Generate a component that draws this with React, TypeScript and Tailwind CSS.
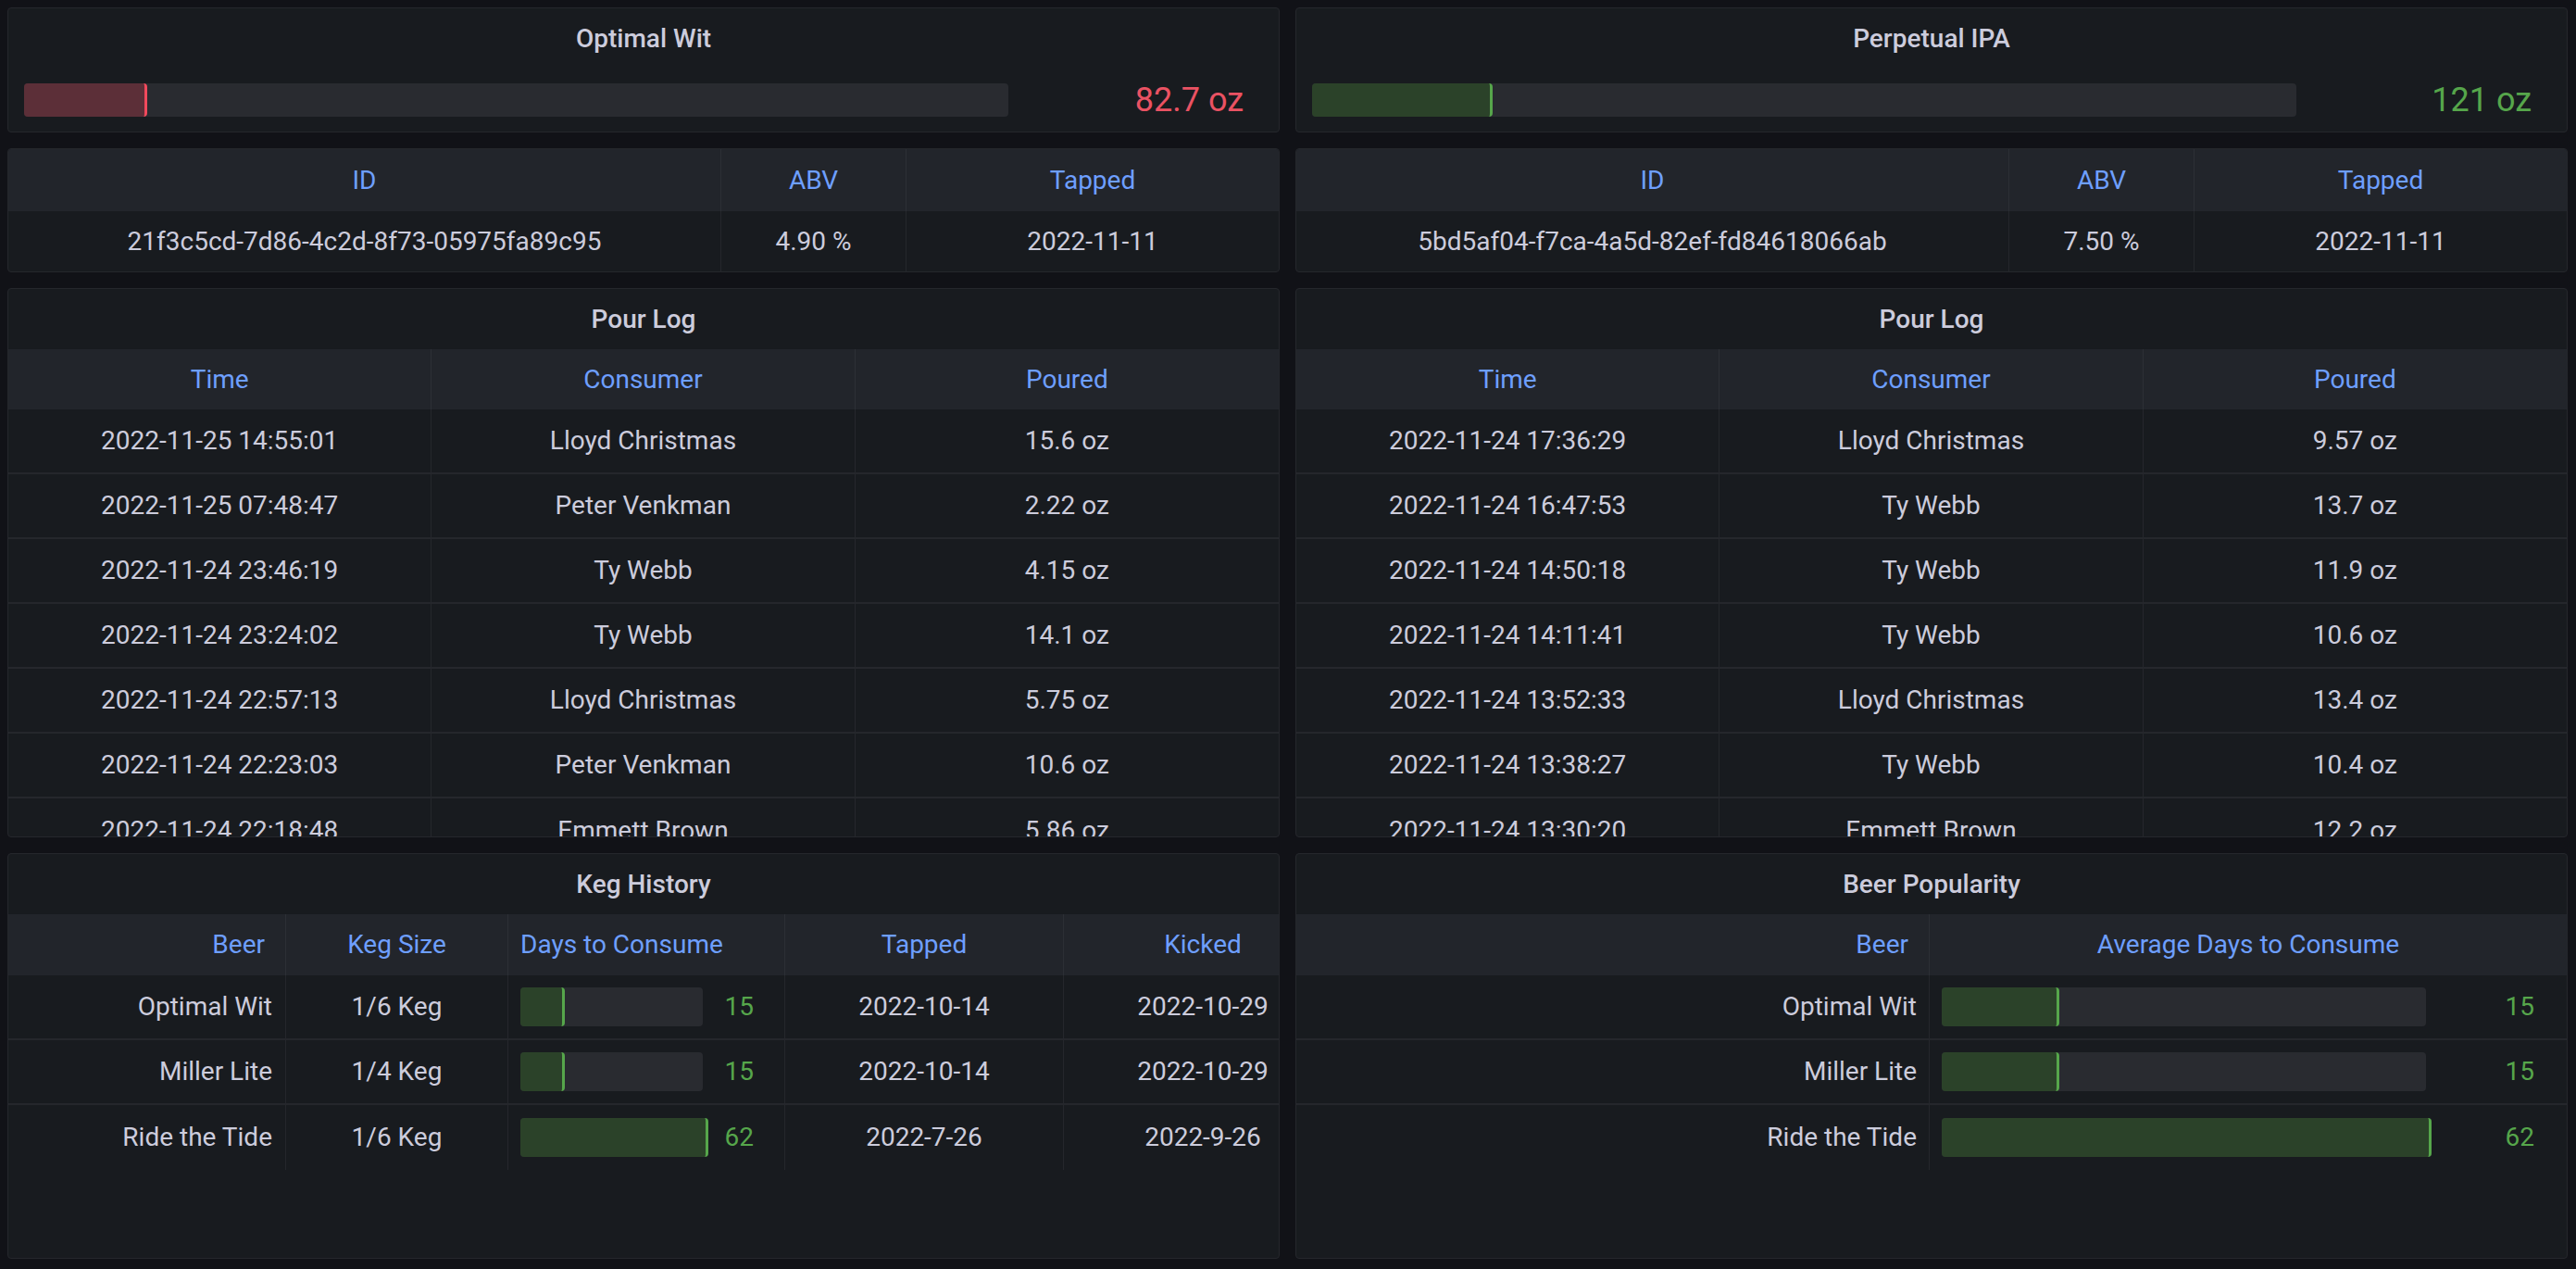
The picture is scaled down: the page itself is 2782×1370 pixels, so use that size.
type Tone = "red" | "green";

const panel =
  "bg-[#181b1f] border border-[#25272c] rounded-[4px] overflow-hidden flex flex-col min-h-0";

const pourLeft = [
  ["2022-11-25 14:55:01", "Lloyd Christmas", "15.6 oz"],
  ["2022-11-25 07:48:47", "Peter Venkman", "2.22 oz"],
  ["2022-11-24 23:46:19", "Ty Webb", "4.15 oz"],
  ["2022-11-24 23:24:02", "Ty Webb", "14.1 oz"],
  ["2022-11-24 22:57:13", "Lloyd Christmas", "5.75 oz"],
  ["2022-11-24 22:23:03", "Peter Venkman", "10.6 oz"],
  ["2022-11-24 22:18:48", "Emmett Brown", "5.86 oz"],
];

const pourRight = [
  ["2022-11-24 17:36:29", "Lloyd Christmas", "9.57 oz"],
  ["2022-11-24 16:47:53", "Ty Webb", "13.7 oz"],
  ["2022-11-24 14:50:18", "Ty Webb", "11.9 oz"],
  ["2022-11-24 14:11:41", "Ty Webb", "10.6 oz"],
  ["2022-11-24 13:52:33", "Lloyd Christmas", "13.4 oz"],
  ["2022-11-24 13:38:27", "Ty Webb", "10.4 oz"],
  ["2022-11-24 13:30:20", "Emmett Brown", "12.2 oz"],
];

const kegs = [
  { beer: "Optimal Wit", size: "1/6 Keg", days: 15, tapped: "2022-10-14", kicked: "2022-10-29" },
  { beer: "Miller Lite", size: "1/4 Keg", days: 15, tapped: "2022-10-14", kicked: "2022-10-29" },
  { beer: "Ride the Tide", size: "1/6 Keg", days: 62, tapped: "2022-7-26", kicked: "2022-9-26" },
];

// fill of a bar gauge, width comes from the data
function Fill({ pct, tone }: { pct: number; tone: Tone }) {
  return (
    <div
      className={
        tone === "red"
          ? "h-full rounded-[4px] bg-[#5c2f38] border-r-[3px] border-[#f2495c]"
          : "h-full rounded-[4px] bg-[#2b4229] border-r-[3px] border-[#56a64b]"
      }
      style={{ width: `${pct}%` }}
    />
  );
}

function Title({ children }: { children: string }) {
  return (
    <div className="h-[65px] shrink-0 flex items-center justify-center text-[28px] font-medium text-[#ccccdc]">
      {children}
    </div>
  );
}

function LevelPanel({ title, value, oz, tone }: { title: string; value: string; oz: number; tone: Tone }) {
  return (
    <div className={panel}>
      <Title>{title}</Title>
      <div className="flex-1 flex items-center pl-[17px] pr-[38px]">
        <div className="flex-1 h-[36px] rounded-[4px] bg-[#292b30]">
          <Fill pct={(oz / 661) * 100} tone={tone} />
        </div>
        <div
          className={
            tone === "red"
              ? "w-[254px] text-right text-[36px] leading-none text-[#ea5263]"
              : "w-[254px] text-right text-[36px] leading-none text-[#56a64b]"
          }
        >
          {value}
        </div>
      </div>
    </div>
  );
}

function InfoPanel({ id, abv, tapped }: { id: string; abv: string; tapped: string }) {
  return (
    <div className={panel}>
      <div className="grid grid-cols-[770px_200px_1fr] h-[67px] shrink-0 bg-[#22252b] text-[#6e9fff]">
        <div className="flex items-center justify-center border-r border-[#2c2f35]">ID</div>
        <div className="flex items-center justify-center border-r border-[#2c2f35]">ABV</div>
        <div className="flex items-center justify-center">Tapped</div>
      </div>
      <div className="grid grid-cols-[770px_200px_1fr] flex-1">
        <div className="flex items-center justify-center border-r border-[#25272c]">{id}</div>
        <div className="flex items-center justify-center border-r border-[#25272c]">{abv}</div>
        <div className="flex items-center justify-center">{tapped}</div>
      </div>
    </div>
  );
}

function PourLog({ rows }: { rows: string[][] }) {
  return (
    <div className={panel}>
      <Title>Pour Log</Title>
      <div className="grid grid-cols-3 h-[65px] shrink-0 bg-[#22252b] text-[#6e9fff]">
        <div className="flex items-center justify-center border-r border-[#2c2f35]">Time</div>
        <div className="flex items-center justify-center border-r border-[#2c2f35]">Consumer</div>
        <div className="flex items-center justify-center">Poured</div>
      </div>
      <div className="flex flex-col divide-y-2 divide-[#25272c]">
        {rows.map((r) => (
          <div key={r[0]} className="grid grid-cols-3 h-[70px] shrink-0">
            <div className="flex items-center justify-center border-r border-[#25272c]">{r[0]}</div>
            <div className="flex items-center justify-center border-r border-[#25272c]">{r[1]}</div>
            <div className="flex items-center justify-center">{r[2]}</div>
          </div>
        ))}
      </div>
    </div>
  );
}

function KegHistory() {
  const cols = "grid grid-cols-[300px_240px_299px_301px_300px] w-[1440px]";
  return (
    <div className={panel}>
      <Title>Keg History</Title>
      <div className={`${cols} h-[66px] shrink-0 bg-[#22252b] text-[#6e9fff]`}>
        <div className="flex items-center justify-end pr-[22px] border-r border-[#2c2f35]">Beer</div>
        <div className="flex items-center justify-center border-r border-[#2c2f35]">Keg Size</div>
        <div className="flex items-center pl-[13px] border-r border-[#2c2f35]">Days to Consume</div>
        <div className="flex items-center justify-center border-r border-[#2c2f35]">Tapped</div>
        <div className="flex items-center justify-center">Kicked</div>
      </div>
      <div className="flex flex-col divide-y-2 divide-[#25272c]">
        {kegs.map((k, i) => (
          <div key={k.beer} className={`${cols} h-[70px] shrink-0`}>
            <div className="flex items-center justify-end pr-[14px] border-r border-[#25272c]">{k.beer}</div>
            <div className="flex items-center justify-center border-r border-[#25272c]">{k.size}</div>
            <div className="flex items-center pl-[13px] border-r border-[#25272c]">
              <div className={i === 2 ? "w-[203px] h-[42px] rounded-[4px] bg-[#292b30]" : "w-[197px] h-[42px] rounded-[4px] bg-[#292b30]"}>
                <Fill pct={(k.days / 62) * 100} tone="green" />
              </div>
              <div className={i === 2 ? "w-[49px] text-right text-[#56a64b]" : "w-[55px] text-right text-[#56a64b]"}>
                {k.days}
              </div>
            </div>
            <div className="flex items-center justify-center border-r border-[#25272c]">{k.tapped}</div>
            <div className="flex items-center justify-center">{k.kicked}</div>
          </div>
        ))}
      </div>
    </div>
  );
}

function BeerPopularity() {
  return (
    <div className={panel}>
      <Title>Beer Popularity</Title>
      <div className="grid grid-cols-[684px_1fr] h-[66px] shrink-0 bg-[#22252b] text-[#6e9fff]">
        <div className="flex items-center justify-end pr-[22px] border-r border-[#2c2f35]">Beer</div>
        <div className="flex items-center justify-center">Average Days to Consume</div>
      </div>
      <div className="flex flex-col divide-y-2 divide-[#25272c]">
        {kegs.map((k, i) => (
          <div key={k.beer} className="grid grid-cols-[684px_1fr] h-[70px] shrink-0">
            <div className="flex items-center justify-end pr-[13px] border-r border-[#25272c]">{k.beer}</div>
            <div className="flex items-center pl-[13px]">
              <div className={i === 2 ? "w-[529px] h-[42px] rounded-[4px] bg-[#292b30]" : "w-[523px] h-[42px] rounded-[4px] bg-[#292b30]"}>
                <Fill pct={(k.days / 62) * 100} tone="green" />
              </div>
              <div className={i === 2 ? "w-[111px] text-right text-[#56a64b]" : "w-[117px] text-right text-[#56a64b]"}>
                {k.days}
              </div>
            </div>
          </div>
        ))}
      </div>
    </div>
  );
}

export default function App() {
  return (
    <div className="h-[1370px] w-[2782px] overflow-hidden bg-[#111217] font-['Roboto',sans-serif] text-[28px] text-[#ccccdc]">
      <div className="grid grid-cols-2 grid-rows-[135px_134px_593px_438px] gap-x-[17px] gap-y-[17px] pt-2 pl-2 pr-[9px]">
        <LevelPanel title="Optimal Wit" value="82.7 oz" oz={82.7} tone="red" />
        <LevelPanel title="Perpetual IPA" value="121 oz" oz={121} tone="green" />
        <InfoPanel id="21f3c5cd-7d86-4c2d-8f73-05975fa89c95" abv="4.90 %" tapped="2022-11-11" />
        <InfoPanel id="5bd5af04-f7ca-4a5d-82ef-fd84618066ab" abv="7.50 %" tapped="2022-11-11" />
        <PourLog rows={pourLeft} />
        <PourLog rows={pourRight} />
        <KegHistory />
        <BeerPopularity />
      </div>
    </div>
  );
}
